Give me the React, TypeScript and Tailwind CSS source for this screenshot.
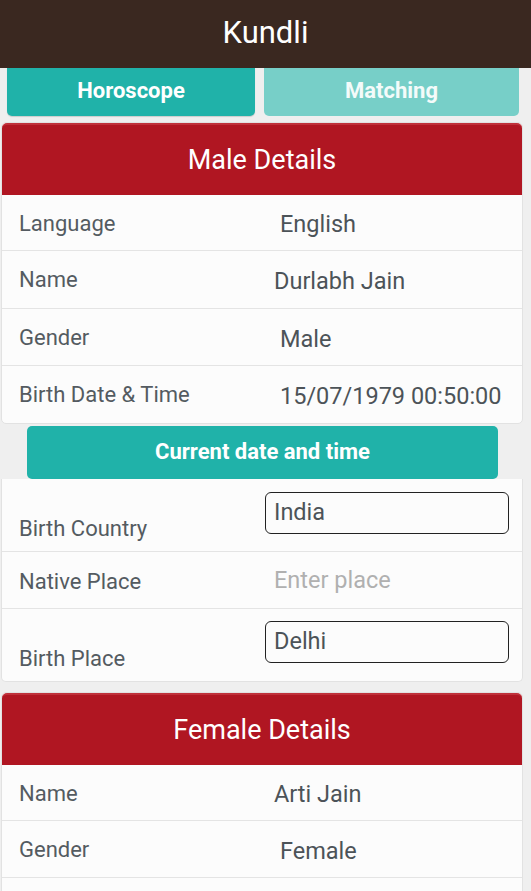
import React from "react"

const font = { fontFamily: "Roboto, 'Noto Sans', sans-serif" }

function Row({ label, value, indent = "pl-[278px]", h = "h-[57px]", last = false }: { label: string; value: string; indent?: string; h?: string; last?: boolean }) {
  return (
    <div className={`relative flex ${h} items-center ${last ? "" : "border-b border-[#e4e4e4]"}`}>
      <span className="absolute left-[17px] top-[12px] text-[22px] text-[#545b61]">{label}</span>
      <span className={`${indent} pt-[5px] text-[23.5px] text-[#4c5358]`}>{value}</span>
    </div>
  )
}

function CardHeader({ title }: { title: string }) {
  return (
    <div className="flex h-[72px] items-center justify-center rounded-t-[5px] border-t-2 border-[#c0303a] bg-[#b01622] text-[27px] text-white">
      {title}
    </div>
  )
}

export default function App() {
  return (
    <div className="h-screen w-[531px] overflow-hidden bg-[#efefef]" style={font}>
      {/* Top bar */}
      <header className="flex h-[68px] items-center justify-center bg-[#3a2820] pb-[2px] text-[31px] text-white">
        Kundli
      </header>

      <div className="w-[524px]">
        {/* Tabs */}
        <div className="flex gap-[9px] pl-[7px] pr-[5px]">
          <button className="h-[48px] w-[248px] rounded-b-[5px] bg-[#20b2a9] pb-[3px] text-[22px] font-bold text-white shadow-[0_1px_1px_rgba(0,0,0,0.15)]">
            Horoscope
          </button>
          <button className="h-[48px] w-[255px] rounded-b-[5px] bg-[#77cfc8] pb-[3px] text-[22px] font-bold text-[#f4fbfa]">
            Matching
          </button>
        </div>

        {/* Male */}
        <div className="mx-[1px] mt-[6px] rounded-[5px] border border-[#e2e2e2] bg-[#fcfcfc]">
          <CardHeader title="Male Details" />
          <Row label="Language" value="English" h="h-[56px]" />
          <Row label="Name" value="Durlabh Jain" indent="pl-[272px]" h="h-[58px]" />
          <Row label="Gender" value="Male" />
          <Row label="Birth Date & Time" value="15/07/1979 00:50:00" last />
        </div>

        <div className="flex justify-start pl-[27px] pt-[2px]">
          <button className="h-[53px] w-[471px] rounded-[5px] bg-[#20b2a9] pb-[2px] text-[22px] font-bold text-white">
            Current date and time
          </button>
        </div>

        <div className="mx-[1px] rounded-b-[5px] border border-t-0 border-[#e2e2e2] bg-[#fcfcfc]">
          <div className="relative h-[73px] border-b border-[#e4e4e4]">
            <span className="absolute left-[17px] top-[33px] text-[22px] text-[#545b61]">Birth Country</span>
            <div className="absolute left-[263px] top-[13px] flex h-[42px] w-[244px] items-center rounded-[6px] border-[1.5px] border-[#222] pl-[8px] text-[23.5px] text-[#4c5358]">
              India
            </div>
          </div>
          <div className="relative flex h-[57px] items-center border-b border-[#e4e4e4]">
            <span className="absolute left-[17px] top-[13px] text-[22px] text-[#545b61]">Native Place</span>
            <span className="pl-[272px] pt-[2px] text-[23.5px] text-[#b0b0b0]">Enter place</span>
          </div>
          <div className="relative h-[72px]">
            <span className="absolute left-[17px] top-[33px] text-[22px] text-[#545b61]">Birth Place</span>
            <div className="absolute left-[263px] top-[12px] flex h-[42px] w-[244px] items-center rounded-[6px] border-[1.5px] border-[#222] pl-[8px] text-[23.5px] text-[#4c5358]">
              Delhi
            </div>
          </div>
        </div>

        {/* Female */}
        <div className="mx-[1px] mt-[10px] rounded-[5px] border border-[#e2e2e2] bg-[#fcfcfc]">
          <CardHeader title="Female Details" />
          <Row label="Name" value="Arti Jain" indent="pl-[272px]" h="h-[56px]" />
          <Row label="Gender" value="Female" />
          <div className="h-[57px]" />
        </div>
      </div>
    </div>
  )
}
